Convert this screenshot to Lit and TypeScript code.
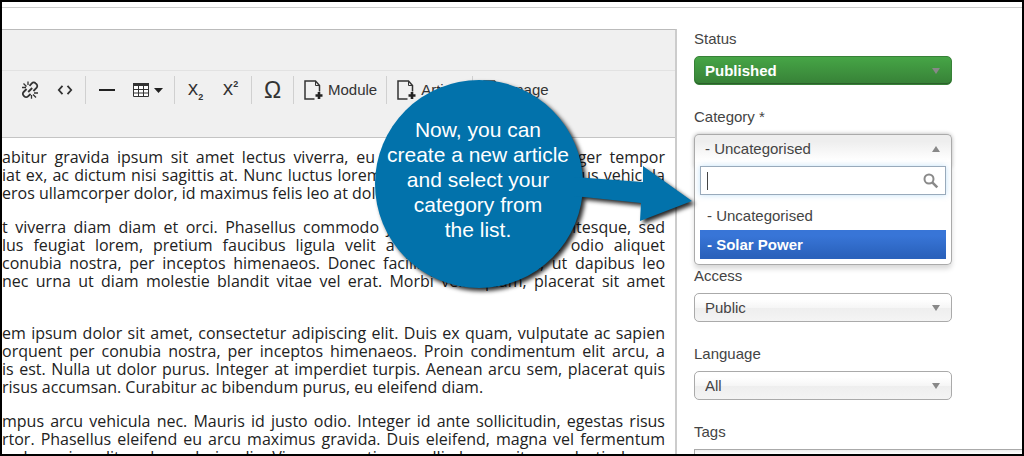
import { LitElement, html, css, svg } from "lit";
import { customElement } from "lit/decorators.js";

const unlinkIcon = html`<svg width="20" height="20" viewBox="0 0 20 20" aria-hidden="true">
  <g fill="none" stroke="#333" stroke-width="1.800">
    <path d="M9.500 5.800 11.800 3.300a2.600 2.600 0 0 1 3.800 0l.9.900a2.600 2.600 0 0 1 0 3.700L13.400 11"/>
    <path d="M6.600 9 3.600 12a2.600 2.600 0 0 0 0 3.700l.7.700a2.600 2.600 0 0 0 3.700 0L10.600 14"/>
    <path d="M8.200 12 12.200 8"/>
    <path stroke-width="1.300" d="M2 7.500h4M3.500 3.500l3 3M8 1.500v3.500M14 13h4M13 14.500l3 3M11.500 15v3.800"/>
  </g></svg>`;

const codeIcon = html`<svg width="16" height="12" viewBox="0 0 16 12" aria-hidden="true">
  <path fill="none" stroke="#333" stroke-width="1.800" d="M5.500 1.800 1.800 6l3.700 4.200M10.500 1.800 14.200 6l-3.700 4.200"/></svg>`;

const ruleIcon = html`<svg width="16" height="4" viewBox="0 0 16 4" aria-hidden="true">
  <path fill="#222" d="M0 1h16v2H0z"/></svg>`;

const tableIcon = html`<svg width="16" height="14" viewBox="0 0 16 14" aria-hidden="true">
  <path fill="#fff" d="M0 0h16v14H0z"/>
  <path fill="#333" d="M0 0h16v3H0z"/>
  <path fill="none" stroke="#333" d="M.5.5h15v13H.5zM0 6.500h16M0 10h16M5.500 2v12M10.500 2v12"/></svg>`;

const caretIcon = html`<svg width="9" height="5" viewBox="0 0 9 5" aria-hidden="true">
  <path fill="#222" d="M0 0h9L4.500 5z"/></svg>`;

const fileIcon = html`<svg width="20" height="20" viewBox="0 0 20 20" aria-hidden="true">
  <path fill="none" stroke="#333" stroke-width="1.500" d="M11.500 19H2V1h10.500l4 4.500v6"/>
  <path fill="none" stroke="#333" stroke-width="1" d="M12.500 1v4.500h4"/>
  <path stroke="#222" stroke-width="2.600" d="M16 12v7M12.500 15.500h7"/></svg>`;

const searchIcon = html`<svg width="16" height="16" viewBox="0 0 16 16" aria-hidden="true">
  <circle cx="6" cy="6" r="4.500" fill="none" stroke="#8a8a8a" stroke-width="2"/>
  <path stroke="#8a8a8a" stroke-width="2.600" d="M9.300 9.300 14.300 14.300"/></svg>`;

const arrowShape = svg`
  <circle cx="105" cy="107" r="104"/>
  <path d="M200 100 269 105V89L318 124 266 144 267 126 200 119z"/>`;

interface Line { text: string; natural?: boolean; }
const paragraphs: Line[][] = [
  [
    { text: "abitur gravida ipsum sit amet lectus viverra, eu ultricies risus luctus. Integer tempor" },
    { text: "iat ex, ac dictum nisi sagittis at. Nunc luctus lorem in metus congue, a faucibus vehicula" },
    { text: "eros ullamcorper dolor, id maximus felis leo at dolor.", natural: true },
  ],
  [
    { text: "t viverra diam diam et orci. Phasellus commodo justo libero a nisl pellentesque, sed" },
    { text: "lus feugiat lorem, pretium faucibus ligula velit a sapien. Nullam non odio aliquet" },
    { text: "conubia nostra, per inceptos himenaeos. Donec facilisis lorem id elit, ut dapibus leo" },
    { text: "nec urna ut diam molestie blandit vitae vel erat. Morbi velit quam, placerat sit amet" },
  ],
  [
    { text: "em ipsum dolor sit amet, consectetur adipiscing elit. Duis ex quam, vulputate ac sapien" },
    { text: "orquent per conubia nostra, per inceptos himenaeos. Proin condimentum elit arcu, a" },
    { text: "is est. Nulla ut dolor purus. Integer at imperdiet turpis. Aenean arcu sem, placerat quis" },
    { text: "risus accumsan. Curabitur ac bibendum purus, eu eleifend diam.", natural: true },
  ],
  [
    { text: "mpus arcu vehicula nec. Mauris id justo odio. Integer id ante sollicitudin, egestas risus" },
    { text: "rtor. Phasellus eleifend eu arcu maximus gravida. Duis eleifend, magna vel fermentum" },
    { text: "m lacus in velit malesuada iaculis. Vivamus pretium mollis lacus, vitae molestie lorem" },
  ],
];

@customElement("article-editor")
class ArticleEditor extends LitElement {
  static styles = css`
    :host { display: block; min-width: 0; border-right: 2px solid #ccc; border-top: 1px solid #bbb; }
    .menubar { height: 40px; background: #f0f0f0; border-bottom: 1px solid #e2e2e2; }
    .toolbar { display: flex; align-items: flex-start; height: 61px; padding-top: 5px; padding-left: 7px;
      background: #f0f0f0; border-bottom: 1px solid #c4c4c4; }
    .group { display: flex; height: 28px; padding: 0 3px; border-right: 1px solid #d0d0d0; }
    .group:last-child { border-right: 0; }
    button { display: flex; align-items: center; justify-content: center; gap: 5px; width: 35px; height: 28px;
      padding: 0; border: 0; background: none; color: #333; font: 15px/20px "Liberation Sans", Arial, sans-serif; }
    .split { width: 47px; }
    .labelled { width: auto; padding: 0 6px; }
    .glyph { font: 20px/24px "Open Sans", sans-serif; gap: 0; }
    .glyph span { padding-bottom: 4px; }
    .glyph sub, .glyph sup { font: bold 9px/10px "Liberation Sans", Arial, sans-serif; }
    .glyph sub { align-self: flex-end; padding-bottom: 2px; }
    .glyph sup { align-self: flex-start; padding-top: 3px; }
    .omega { font: 23px/28px "Liberation Sans", Arial, sans-serif; }
    .text { padding: 10px 10px 0 0; color: #222; font: 16px/18px "Open Sans", sans-serif; }
    p { margin: 0 0 16px; }
    .spaced { margin-bottom: 34px; }
    .line { display: block; white-space: nowrap; text-align: justify; text-align-last: justify; }
    .natural { text-align-last: left; }
  `;
  render() {
    return html`
      <div class="menubar"></div>
      <div class="toolbar" role="toolbar" aria-label="Editor">
        <div class="group">
          <button aria-label="Remove link">${unlinkIcon}</button>
          <button aria-label="Source code">${codeIcon}</button>
        </div>
        <div class="group">
          <button aria-label="Horizontal line">${ruleIcon}</button>
          <button class="split" aria-label="Table">${tableIcon}${caretIcon}</button>
        </div>
        <div class="group">
          <button class="glyph" aria-label="Subscript"><span>x</span><sub>2</sub></button>
          <button class="glyph" aria-label="Superscript"><span>x</span><sup>2</sup></button>
        </div>
        <div class="group"><button class="omega" aria-label="Special character">Ω</button></div>
        <div class="group"><button class="labelled">${fileIcon}Module</button></div>
        <div class="group"><button class="labelled">${fileIcon}Article</button></div>
        <div class="group"><button class="labelled">${fileIcon}Image</button></div>
      </div>
      <div class="text">
        ${paragraphs.map((p, i) => html`<p class=${i === 1 ? "spaced" : ""}>${p.map(
          (l) => html`<span class="line ${l.natural ? "natural" : ""}">${l.text}</span>`)}</p>`)}
      </div>`;
  }
}

@customElement("article-options")
class ArticleOptions extends LitElement {
  static styles = css`
    :host { display: flex; flex-direction: column; gap: 22px; padding-left: 17px;
      color: #444; font: 15px/20px "Liberation Sans", Arial, sans-serif; }
    .field { display: grid; gap: 7px; }
    .tall { margin-bottom: 81px; }
    .box { position: relative; width: 258px; }
    select, .current { appearance: none; box-sizing: border-box; display: block; width: 100%; height: 29px;
      padding: 0 10px; border: 1px solid #aaa; border-radius: 5px; font: inherit; color: #444; text-align: left;
      background: linear-gradient(#fff 20%, #f6f6f6 50%, #eee 52%, #f4f4f4 100%); }
    .arrow { position: absolute; right: 12px; top: 12px; width: 8px; height: 6px; fill: #888; pointer-events: none; }
    .published { color: #fff; font-weight: bold; border-color: #378137;
      background: linear-gradient(#46a546, #378137); box-shadow: inset 0 -1px 0 #2b602b; }
    .published option { color: #444; }
    .current { height: 33px; padding-bottom: 4px; border-bottom: 0; border-radius: 5px 5px 0 0;
      background: linear-gradient(#eee 20%, #fff 80%); box-shadow: 0 0 4px rgba(0,0,0,.3); }
    .crop { height: 29px; }
    .menu { position: absolute; z-index: 2; left: 0; right: 0; top: 29px; box-sizing: border-box; padding: 3px 5px 5px;
      background: #fff; border: 1px solid #aaa; border-top: 0; border-radius: 0 0 5px 5px; box-shadow: 0 4px 5px rgba(0,0,0,.15); }
    .search { display: flex; align-items: center; height: 27px; padding: 0 6px; border: 1px solid #9ab; background: #fff;
      box-shadow: 0 0 6px rgba(82,168,236,.35); }
    .search input { flex: 1; min-width: 0; height: 18px; padding: 0; border: 0; border-left: 1px solid #444; outline: 0;
      font: inherit; background: none; }
    ul { margin: 6px 0 0; padding: 0; list-style: none; }
    li { padding: 0 7px; line-height: 29px; }
    .chosen { color: #fff; font-weight: bold; background: linear-gradient(#3875d7 20%, #2a62bc 90%); }
    .tags { box-sizing: border-box; width: 100%; height: 30px; border: 1px solid #aaa; border-right: 0; padding: 0 6px;
      font: inherit; background: linear-gradient(#eee 1%, #fff 15%); }
  `;
  private down = html`<svg class="arrow" viewBox="0 0 8 6" aria-hidden="true"><path d="M0 0h8L4 6z"/></svg>`;
  render() {
    return html`
      <div class="field">
        <label for="status">Status</label>
        <div class="box"><select id="status" class="published"><option>Published</option></select>${this.down}</div>
      </div>
      <div class="field tall">
        <label for="filter">Category *</label>
        <div class="box crop">
          <button class="current" aria-expanded="true">- Uncategorised</button>
          <svg class="arrow" viewBox="0 0 8 6" aria-hidden="true"><path d="M0 6h8L4 0z"/></svg>
          <div class="menu">
            <div class="search"><input id="filter" type="text">${searchIcon}</div>
            <ul role="listbox" aria-label="Category">
              <li role="option">- Uncategorised</li>
              <li role="option" class="chosen" aria-selected="true">- Solar Power</li>
            </ul>
          </div>
        </div>
      </div>
      <div class="field">
        <label for="access">Access</label>
        <div class="box"><select id="access"><option>Public</option></select>${this.down}</div>
      </div>
      <div class="field">
        <label for="language">Language</label>
        <div class="box"><select id="language"><option>All</option></select>${this.down}</div>
      </div>
      <div class="field">
        <label for="tags">Tags</label>
        <input id="tags" class="tags" type="text">
      </div>`;
  }
}

@customElement("app-root")
class AppRoot extends LitElement {
  static styles = css`
    :host { display: block; box-sizing: border-box; position: relative; height: 100vh; overflow: hidden;
      border: 2px solid #000; background: #fff; }
    .page { display: grid; grid-template-columns: minmax(0, 1fr) 345px; margin-top: 5px; padding-top: 21px;
      border-top: 1px solid #ccc; }
    .callout { position: absolute; z-index: 5; left: 372px; top: 75px; display: grid; }
    .shape { grid-area: 1 / 1; width: 330px; height: 225px; fill: #0272ab; filter: drop-shadow(3px 3px 2px rgba(0,0,0,.85)); }
    .message { grid-area: 1 / 1; width: 208px; padding-top: 40px; color: #fff; text-align: center;
      font: 21px/25px "Liberation Sans", Arial, sans-serif; z-index: 1; }
  `;
  render() {
    return html`
      <div class="page">
        <article-editor></article-editor>
        <article-options></article-options>
      </div>
      <div class="callout">
        <svg class="shape" viewBox="0 0 330 225" aria-hidden="true">${arrowShape}</svg>
        <div class="message">Now, you can<br>create a new article<br>and select your<br>category from<br>the list.</div>
      </div>`;
  }
}
